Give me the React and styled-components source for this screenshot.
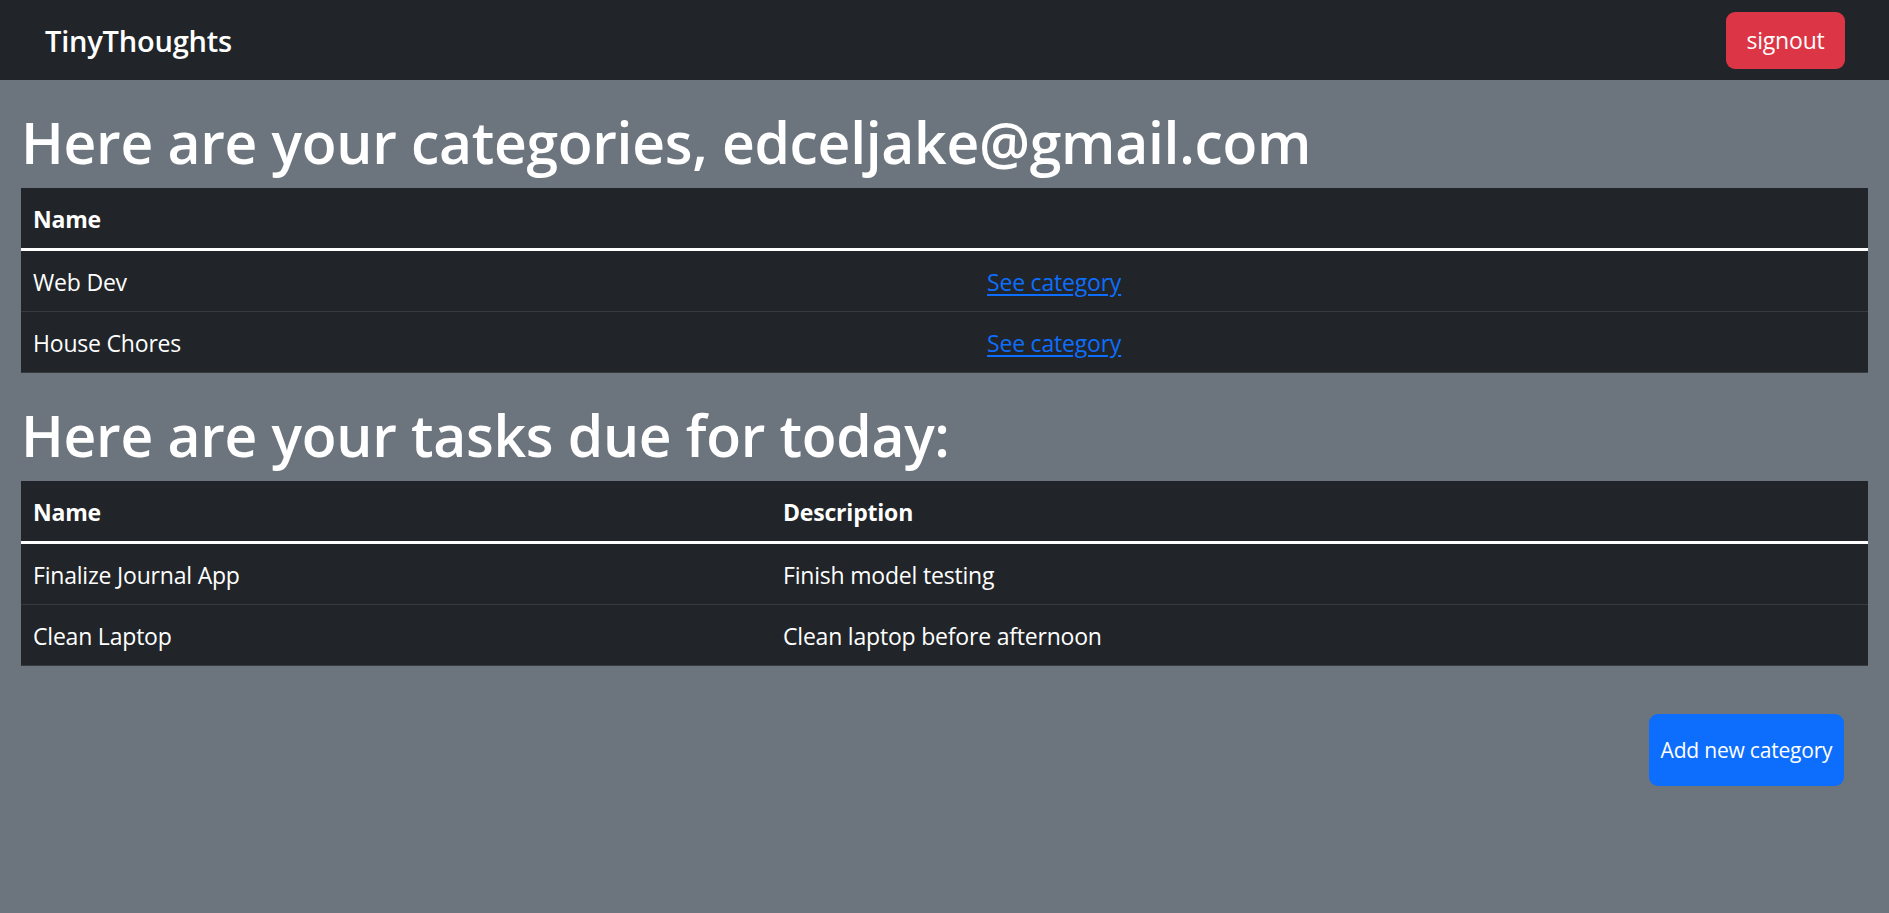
import React from "react";
import styled, { createGlobalStyle } from "styled-components";

const GlobalStyle = createGlobalStyle`
  html, body {
    margin: 0;
    padding: 0;
    background: #6c757d;
    font-family: "Open Sans", "Noto Sans", sans-serif;
    color: #fff;
  }
  #root {
    min-height: 913px;
    background: #6c757d;
  }
`;

const Navbar = styled.nav`
  height: 80px;
  background: #212529;
  display: flex;
  align-items: center;
  justify-content: space-between;
  padding: 0 44px 0 45px;
  box-sizing: border-box;
`;

const Brand = styled.a`
  color: #fff;
  font-size: 29px;
  font-weight: 600;
  text-decoration: none;
  letter-spacing: -0.2px;
`;

const Button = styled.button`
  border: none;
  color: #fff;
  font-family: inherit;
  cursor: pointer;
  border-radius: 9px;
  display: flex;
  align-items: center;
  justify-content: center;
  padding: 0;
  width: ${(p) => p.$w}px;
  height: ${(p) => p.$h}px;
  font-size: ${(p) => p.$fs}px;
  background: ${(p) => (p.$variant === "danger" ? "#dc3545" : "#0d6efd")};
  letter-spacing: -0.2px;
`;

const Main = styled.main`
  padding: 24px 21px 0;
`;

const Heading = styled.h1`
  margin: 0 0 12px;
  font-size: 57px;
  font-weight: 600;
  line-height: 72px;
  color: #fff;
  letter-spacing: -0.3px;
  padding-top: 2px;
  height: 70px;
`;

const Table = styled.table`
  width: 100%;
  table-layout: fixed;
  border-collapse: collapse;
  background: #212529;
  color: #fff;
  margin-bottom: 24px;
  font-size: 23px;
  letter-spacing: -0.2px;
`;

const Th = styled.th`
  text-align: left;
  font-weight: 700;
  padding: 13px 12px 11px;
  line-height: 36px;
  border-bottom: 3px solid #fff;
`;

const Td = styled.td`
  padding: 13px 12px 11px;
  line-height: 36px;
  border-bottom: 1px solid #373b3e;
`;

const Link = styled.a`
  color: #0d6efd;
  text-decoration: underline;
  text-underline-offset: 3px;
  cursor: pointer;
`;

const Footer = styled.div`
  display: flex;
  justify-content: flex-end;
  padding: 24px 24px;
`;

const categories = ["Web Dev", "House Chores"];
const tasks = [
  { name: "Finalize Journal App", description: "Finish model testing" },
  { name: "Clean Laptop", description: "Clean laptop before afternoon" },
];

export default function App() {
  return (
    <>
      <GlobalStyle />
      <Navbar>
        <Brand href="#">TinyThoughts</Brand>
        <Button $variant="danger" $w={119} $h={57} $fs={23}>
          signout
        </Button>
      </Navbar>
      <Main>
        <Heading>Here are your categories, edceljake@gmail.com</Heading>
        <Table>
          <colgroup>
            <col style={{ width: "954px" }} />
            <col />
          </colgroup>
          <thead>
            <tr>
              <Th>Name</Th>
              <Th></Th>
            </tr>
          </thead>
          <tbody>
            {categories.map((c) => (
              <tr key={c}>
                <Td>{c}</Td>
                <Td>
                  <Link>See category</Link>
                </Td>
              </tr>
            ))}
          </tbody>
        </Table>
        <Heading>Here are your tasks due for today:</Heading>
        <Table>
          <colgroup>
            <col style={{ width: "750px" }} />
            <col />
          </colgroup>
          <thead>
            <tr>
              <Th>Name</Th>
              <Th>Description</Th>
            </tr>
          </thead>
          <tbody>
            {tasks.map((t) => (
              <tr key={t.name}>
                <Td>{t.name}</Td>
                <Td>{t.description}</Td>
              </tr>
            ))}
          </tbody>
        </Table>
        <Footer>
          <Button $w={195} $h={72} $fs={21}>
            Add new category
          </Button>
        </Footer>
      </Main>
    </>
  );
}
